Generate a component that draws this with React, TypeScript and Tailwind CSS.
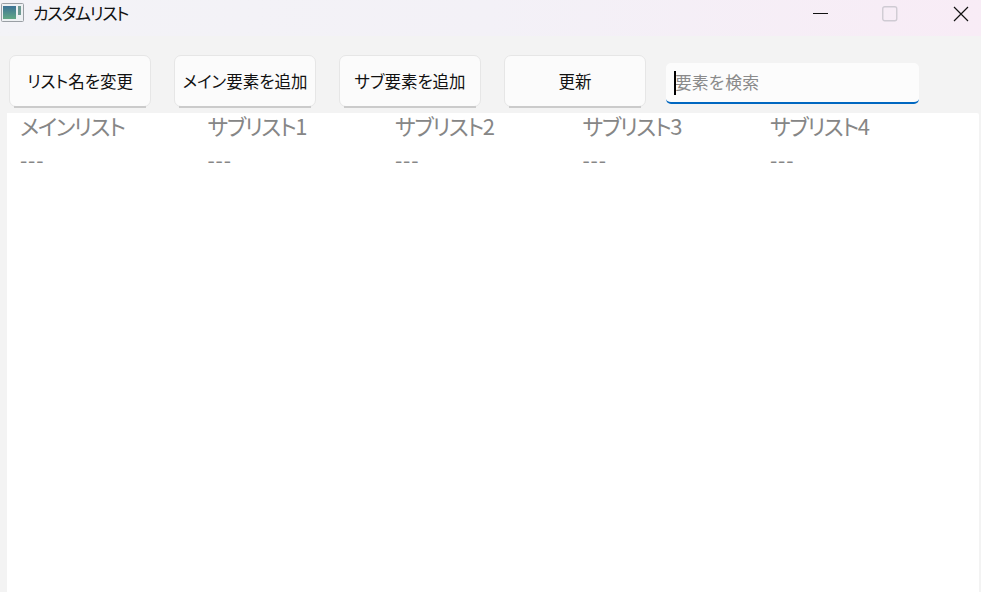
const font = "font-['Noto_Sans_CJK_JP','Noto_Sans',sans-serif]";

const columns = ["メインリスト", "サブリスト1", "サブリスト2", "サブリスト3", "サブリスト4"];
const actions = ["リスト名を変更", "メイン要素を追加", "サブ要素を追加", "更新"];

const ToolButton = ({ label }: { label: string }) => (
  <button className="relative flex h-[52px] w-[142px] shrink-0 items-center justify-center rounded-[7px] border-[1.5px] border-[#e6e6e6] bg-[#fbfbfb] text-[16.5px] text-[#111] [font-feature-settings:'palt']">
    {label}
    <span className="absolute inset-x-[4px] bottom-[-1.5px] h-[1.5px] bg-[#cbcbcb]" />
  </button>
);

const TitleBar = () => (
  <header className="flex h-[36px] items-start bg-gradient-to-r from-[#f3f3f7] via-[#f3f1f7] to-[#f8ecf6]">
    <svg width="24" height="19" viewBox="0 0 24 19" className="mt-[3px] ml-px shrink-0">
      <defs>
        <linearGradient id="pane" x1="0" y1="0" x2="0" y2="1">
          <stop offset="0" stopColor="#3d7396" />
          <stop offset="1" stopColor="#62a884" />
        </linearGradient>
      </defs>
      <rect x="0.5" y="0.5" width="22" height="18" rx="1" fill="#eef1f3" stroke="#9a9fa4" />
      <rect x="2" y="3" width="13" height="13" fill="url(#pane)" />
      <rect x="17" y="3" width="3" height="9" fill="#6f9a92" />
    </svg>
    <span className="mt-[2px] ml-[8px] text-[17px] leading-[22px] tracking-[-1.3px] text-[#111] [font-feature-settings:'palt']">カスタムリスト</span>
    <div className="ml-auto flex items-start">
      <svg width="16" height="16" viewBox="0 0 16 16" className="mt-[6px] mr-[53px]">
        <path d="M0 7.5H15" stroke="#111" strokeWidth="1" />
      </svg>
      <svg width="16" height="16" viewBox="0 0 16 16" className="mt-[6px] mr-[55px]">
        <rect x="0.75" y="0.75" width="14" height="14" rx="2" fill="none" stroke="#cfcbd3" strokeWidth="1.4" />
      </svg>
      <svg width="16" height="16" viewBox="0 0 16 16" className="mt-[6px] mr-[12px]">
        <path d="M1 1L15 15M15 1L1 15" stroke="#111" strokeWidth="1.2" />
      </svg>
    </div>
  </header>
);

export default function App() {
  return (
    <div className={`flex h-[592px] w-[981px] flex-col overflow-hidden bg-[#f3f3f3] ${font}`}>
      <TitleBar />
      <div className="flex h-[77px] items-start pt-[19px] pl-[9px]">
        <div className="flex gap-[23px]">
          {actions.map((label) => (
            <ToolButton key={label} label={label} />
          ))}
        </div>
        <div className="relative mt-[8px] ml-[20px] flex h-[40.5px] w-[253px] items-center rounded-[5px] border-b-2 border-[#0067c0] bg-[#fcfcfc] pl-[9px] text-[16.8px] text-[#8a8a8a]">
          <span className="absolute top-[8px] left-[8px] h-[24px] w-[2px] bg-black" />
          要素を検索
        </div>
      </div>
      <main className="mr-[2px] ml-[7px] flex-1 rounded-tr-[2px] bg-white pl-[13px]">
        <div className="grid grid-cols-[187.5px_187.5px_187.5px_187.5px_187.5px] text-[#868686]">
          {columns.map((name) => (
            <div key={name} className="flex flex-col">
              <span className="-mt-[2px] text-[22px] leading-[28px] tracking-[-1.4px] [font-feature-settings:'palt']">{name}</span>
              <span className="mt-[6px] text-[21px] leading-[28px] tracking-[0.8px]">---</span>
            </div>
          ))}
        </div>
      </main>
    </div>
  );
}
